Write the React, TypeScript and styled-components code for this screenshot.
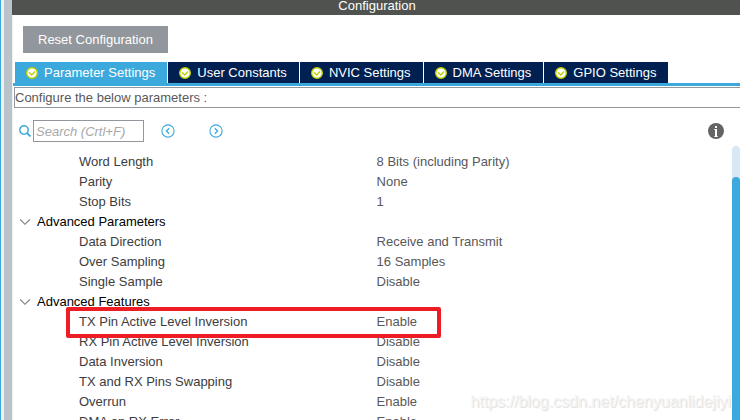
import React from "react";
import styled, { createGlobalStyle } from "styled-components";

const GlobalStyle = createGlobalStyle`
  * { box-sizing: border-box; }
  body {
    margin: 0;
    background: #fff;
    font: 13px/20px "Liberation Sans", Arial, sans-serif;
    color: #58585a;
  }
  button, input { font: inherit; margin: 0; }
`;

const Window = styled.div`
  display: flex;
  height: 100vh;
  overflow: hidden;
  border-left: 1px solid #3ba9dc;
`;

const Divider = styled.div`
  flex: none;
  width: 11px;
  background: #b9c4ca;
  border-left: 3px solid #f0f0f0;
`;

const Panel = styled.main`
  flex: 1;
  min-width: 0;
  display: flex;
  flex-direction: column;
`;

const TitleBar = styled.h1`
  flex: none;
  display: flex;
  align-items: flex-end;
  justify-content: center;
  height: 15px;
  margin: 0;
  padding-left: 2px;
  background: #50524f;
  color: #fff;
  font-size: 13px;
  font-weight: 400;
  line-height: 18px;
`;

const Content = styled.div`
  flex: 1;
  min-height: 0;
  display: flex;
  flex-direction: column;
  border-left: 1px solid #f0f0f0;
`;

const ResetButton = styled.button`
  align-self: flex-start;
  flex: none;
  height: 27px;
  margin: 11px 0 9px 10px;
  padding: 0 15px;
  border: 0;
  background: #91979d;
  color: #fff;
`;

const TabBar = styled.div`
  flex: none;
  display: flex;
  gap: 1px;
  padding-left: 2px;
  border-bottom: 3px solid #3ba9dc;
`;

const Tab = styled.button<{ $active?: boolean }>`
  display: flex;
  align-items: center;
  gap: 6px;
  height: 21px;
  padding: 0 12px 0 11px;
  border: 0;
  white-space: nowrap;
  background: ${(p) => (p.$active ? "#3ba9dc" : "#002052")};
  color: #fff;
`;

const Hint = styled.p`
  flex: none;
  height: 21px;
  margin: 1px 0 0 1px;
  border: 1px solid #91979d;
  border-right: 0;
  line-height: 19px;
`;

const SearchBar = styled.div`
  flex: none;
  display: flex;
  align-items: center;
  height: 22px;
  margin: 12px 16px 4px 6px;
`;

const SearchLabel = styled.label`
  display: flex;
  align-items: center;
  gap: 2px;
  margin-right: 17px;
`;

const SearchInput = styled.input`
  width: 111px;
  height: 22px;
  padding: 0 2px;
  border: 1px solid #91979d;
  border-radius: 0;
  background: #fff;
  &::placeholder { color: #a9a9a9; font-style: italic; opacity: 1; }
`;

const IconButton = styled.button`
  display: flex;
  padding: 0;
  border: 0;
  background: none;
`;

const NextButton = styled(IconButton)`
  margin-left: 34px;
`;

const InfoButton = styled(IconButton)`
  margin-left: auto;
`;

const Body = styled.div`
  position: relative;
  flex: 1;
  min-height: 0;
  display: flex;
`;

const TableArea = styled.div`
  flex: 1;
  min-width: 0;
  overflow: hidden;
  padding: 6px 0 0 1px;
`;

const Table = styled.table`
  width: 100%;
  table-layout: fixed;
  border-collapse: collapse;
`;

const Row = styled.tr`
  position: relative;
  height: 20px;
`;

const NameCell = styled.th`
  width: 50.5%;
  padding: 0 0 0 65px;
  text-align: left;
  font-weight: 400;
  color: #3c3c3e;
`;

const ValueCell = styled.td`
  padding: 0;
`;

const GroupCell = styled.th`
  padding: 0 0 0 5px;
  text-align: left;
  font-weight: 400;
`;

const GroupButton = styled.button`
  display: flex;
  align-items: center;
  gap: 6px;
  height: 20px;
  padding: 0;
  border: 0;
  background: none;
  color: #000;
`;

const Highlight = styled.span`
  position: absolute;
  z-index: 1;
  top: -5px;
  left: 52px;
  width: 375px;
  height: 31px;
  border: 4px solid #ee1c25;
  border-radius: 2px;
  pointer-events: none;
`;

const ScrollTrack = styled.div`
  flex: none;
  width: 8px;
  padding-top: 31px;
  border-radius: 4px 4px 0 0;
  background: #d8e8f5;
`;

const ScrollThumb = styled.div`
  height: 100%;
  border-radius: 4px 4px 0 0;
  background: #3ba9dc;
`;

const Watermark = styled.span`
  position: absolute;
  right: 9px;
  bottom: 8px;
  font-size: 16px;
  color: #f4f4f4;
  text-shadow: 1px 1px 1px #dcdcdc;
`;

const CheckIcon = () => (
  <svg width="12" height="12" viewBox="0 0 12 12" aria-hidden="true">
    <circle cx="6" cy="6" r="5.3" fill="#fff" stroke="#bccf00" strokeWidth="1.4" />
    <path d="M3 5.2 L5.6 7.9 L9 4.5" fill="none" stroke="#bccf00" strokeWidth="1.4" />
  </svg>
);

const SearchIcon = () => (
  <svg width="12" height="12" viewBox="0 0 12 12" aria-hidden="true">
    <circle cx="5" cy="5" r="4.2" fill="none" stroke="#3ba9dc" strokeWidth="1.5" />
    <path d="M8 8 L11.5 11.5" stroke="#3ba9dc" strokeWidth="1.8" />
  </svg>
);

const ArrowIcon = ({ d }: { d: string }) => (
  <svg width="14" height="14" viewBox="0 0 14 14" aria-hidden="true">
    <circle cx="7" cy="7" r="6.1" fill="none" stroke="#3ba9dc" strokeWidth="1.1" />
    <path d={d} fill="none" stroke="#3ba9dc" strokeWidth="1.3" />
  </svg>
);

const InfoIcon = () => (
  <svg width="16" height="16" viewBox="0 0 16 16" aria-hidden="true">
    <circle cx="8" cy="8" r="8" fill="#646464" />
    <rect x="7" y="3" width="2" height="2" fill="#fff" />
    <path d="M6 6.5H8M6 13.5H10" fill="none" stroke="#fff" strokeWidth="1" opacity="0.7" />
    <rect x="7" y="6" width="2" height="8" fill="#fff" />
  </svg>
);

const ChevronIcon = () => (
  <svg width="12" height="12" viewBox="0 0 12 12" aria-hidden="true">
    <path d="M1.2 3.5 L6 8.3 L10.8 3.5" fill="none" stroke="#808080" strokeWidth="1.1" />
  </svg>
);

const tabs = ["Parameter Settings", "User Constants", "NVIC Settings", "DMA Settings", "GPIO Settings"];

type Param = { name: string; value?: string; marked?: boolean };

const params: Param[] = [
  { name: "Word Length", value: "8 Bits (including Parity)" },
  { name: "Parity", value: "None" },
  { name: "Stop Bits", value: "1" },
  { name: "Advanced Parameters" },
  { name: "Data Direction", value: "Receive and Transmit" },
  { name: "Over Sampling", value: "16 Samples" },
  { name: "Single Sample", value: "Disable" },
  { name: "Advanced Features" },
  { name: "TX Pin Active Level Inversion", value: "Enable", marked: true },
  { name: "RX Pin Active Level Inversion", value: "Disable" },
  { name: "Data Inversion", value: "Disable" },
  { name: "TX and RX Pins Swapping", value: "Disable" },
  { name: "Overrun", value: "Enable" },
  { name: "DMA on RX Error", value: "Enable" },
];

export default function App() {
  return (
    <>
      <GlobalStyle />
      <Window>
        <Divider />
        <Panel>
          <TitleBar>Configuration</TitleBar>
          <Content>
            <ResetButton type="button">Reset Configuration</ResetButton>
            <TabBar role="tablist">
              {tabs.map((label, i) => (
                <Tab key={label} type="button" role="tab" aria-selected={i === 0} $active={i === 0}>
                  <CheckIcon />
                  {label}
                </Tab>
              ))}
            </TabBar>
            <Hint>Configure the below parameters :</Hint>
            <SearchBar>
              <SearchLabel>
                <SearchIcon />
                <SearchInput type="text" placeholder="Search (Crtl+F)" aria-label="Search" />
              </SearchLabel>
              <IconButton type="button" aria-label="Previous match">
                <ArrowIcon d="M8.2 4.2 L5.4 7 L8.2 9.8" />
              </IconButton>
              <NextButton type="button" aria-label="Next match">
                <ArrowIcon d="M5.8 4.2 L8.6 7 L5.8 9.8" />
              </NextButton>
              <InfoButton type="button" aria-label="Information">
                <InfoIcon />
              </InfoButton>
            </SearchBar>
            <Body>
              <TableArea>
                <Table>
                  <tbody>
                    {params.map((p) =>
                      p.value === undefined ? (
                        <Row key={p.name}>
                          <GroupCell colSpan={2}>
                            <GroupButton type="button" aria-expanded="true">
                              <ChevronIcon />
                              {p.name}
                            </GroupButton>
                          </GroupCell>
                        </Row>
                      ) : (
                        <Row key={p.name}>
                          <NameCell scope="row">
                            {p.name}
                            {p.marked && <Highlight />}
                          </NameCell>
                          <ValueCell>{p.value}</ValueCell>
                        </Row>
                      )
                    )}
                  </tbody>
                </Table>
              </TableArea>
              <ScrollTrack>
                <ScrollThumb />
              </ScrollTrack>
              <Watermark>https://blog.csdn.net/chenyuanlidejiyi</Watermark>
            </Body>
          </Content>
        </Panel>
      </Window>
    </>
  );
}
